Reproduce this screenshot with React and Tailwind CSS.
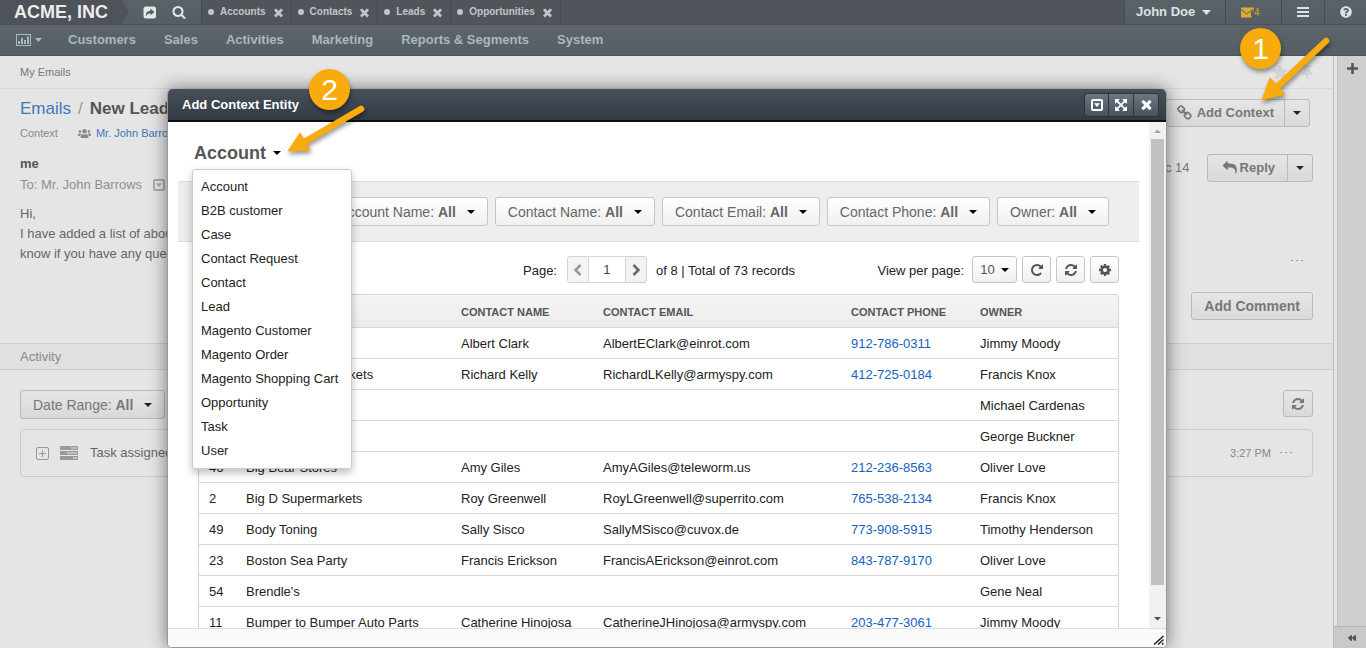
import React from "react";
import { FaUsers, FaQuestionCircle, FaBackward, FaStar, FaThumbtack } from "react-icons/fa";

const PATHS = {
  times:
    "M1490 1322q0 40-28 68l-136 136q-28 28-68 28t-68-28l-294-294-294 294q-28 28-68 28t-68-28l-136-136q-28-28-28-68t28-68l294-294-294-294q-28-28-28-68t28-68l136-136q28-28 68-28t68 28l294 294 294-294q28-28 68-28t68 28l136 136q28 28 28 68t-28 68l-294 294 294 294q28 28 28 68z",
  refresh:
    "M1639 1056q0 5-1 7-64 268-268 434.5t-478 166.5q-146 0-282.5-55t-243.5-157l-129 129q-19 19-45 19t-45-19-19-45v-448q0-26 19-45t45-19h448q26 0 45 19t19 45-19 45l-137 137q71 66 161 102t187 36q134 0 250-65t186-179q11-17 53-117 8-23 30-23h192q13 0 22.5 9.5t9.5 22.5zm25-800v448q0 26-19 45t-45 19h-448q-26 0-45-19t-19-45 19-45l138-138q-148-137-349-137-134 0-250 65t-186 179q-11 17-53 117-8 23-30 23h-199q-13 0-22.5-9.5t-9.5-22.5v-7q65-268 270-434.5t480-166.5q146 0 284 55.5t245 156.5l130-129q19-19 45-19t45 19 19 45z",
  cog:
    "M1152 896q0-106-75-181t-181-75-181 75-75 181 75 181 181 75 181-75 75-181zm512-109v222q0 12-8 23t-20 13l-185 28q-19 54-39 91 35 50 107 138 10 12 10 25t-9 23q-27 37-99 108t-94 71q-12 0-26-9l-138-108q-44 23-91 38-16 136-29 186-7 28-36 28h-222q-14 0-24.5-8.500t-11.500-21.500l-28-184q-49-16-90-37l-141 107q-10 9-25 9-14 0-25-11-126-114-165-168-7-10-7-23 0-12 8-23 15-21 51-66.500t54-70.500q-27-50-41-99l-183-27q-13-2-21-12.500t-8-23.500v-222q0-12 8-23t19-13l186-28q14-46 39-92-40-57-107-138-10-12-10-24 0-10 9-23 26-36 98.500-107.500t94.500-71.500q13 0 26 10l138 107q44-23 91-38 16-136 29-186 7-28 36-28h222q14 0 24.500 8.500t11.500 21.500l28 184q49 16 90 37l142-107q9-9 24-9 13 0 25 10 129 119 165 170 7 8 7 22 0 12-8 23-15 21-51 66.500t-54 70.500q26 50 41 98l183 28q13 2 21 12.500t8 23.500z",
  repeat:
    "M1664 256v448q0 26-19 45t-45 19h-448q-42 0-59-40-17-39 14-69l138-138q-148-137-349-137-104 0-198.5 40.5t-163.5 109.5-109.5 163.5-40.5 198.5 40.5 198.5 109.5 163.5 163.5 109.5 198.5 40.5q119 0 225-52t179-147q7-10 23-12 15 0 25 9l137 138q9 8 9.5 20.5t-7.5 22.5q-109 132-264 204.5t-327 72.5q-156 0-298-61t-245-164-164-245-61-298 61-298 164-245 245-164 298-61q147 0 284.5 55.5t244.5 156.5l130-129q29-31 70-14 39 17 39 59z",
  search:
    "M1216 832q0-185-131.5-316.5t-316.5-131.5-316.5 131.5-131.5 316.5 131.5 316.5 316.5 131.5 316.5-131.5 131.5-316.5zm512 832q0 52-38 90t-90 38q-54 0-90-38l-343-342q-179 124-399 124-143 0-273.5-55.5t-225-150-150-225-55.5-273.5 55.5-273.5 150-225 225-150 273.5-55.5 273.5 55.5 225 150 150 225 55.5 273.5q0 220-124 399l343 343q37 37 37 90z",
  reply:
    "M1792 1120q0 166-127 451-3 7-10.5 24t-13.5 30-13 22q-12 17-28 17-15 0-23.5-10t-8.5-25q0-9 2.5-26.5t2.5-23.5q5-68 5-123 0-112-19.5-200.5t-54-153.5-89-112-113-77.5-139.5-47.5-155.5-25-174.5-7.5h-224v256q0 26-19 45t-45 19-45-19l-512-512q-19-19-19-45t19-45l512-512q19-19 45-19t45 19 19 45v256h224q713 0 875 403 53 134 53 333z",
  expand:
    "M1411 541l-355 355 355 355 144-144q29-31 70-14 39 17 39 59v448q0 26-19 45t-45 19h-448q-42 0-59-40-17-39 14-69l144-144-355-355-355 355 144 144q31 30 14 69-17 40-59 40h-448q-26 0-45-19t-19-45v-448q0-42 40-59 39-17 69 14l144 144 355-355-355-355-144 144q-19 19-45 19-12 0-24-5-40-17-40-59v-448q0-26 19-45t45-19h448q42 0 59 40 17 39-14 69l-144 144 355 355 355-355-144-144q-31-30-14-69 17-40 59-40h448q26 0 45 19t19 45v448q0 42-39 59-13 5-25 5-26 0-45-19z",
  link:
    "M1456 1216q0-40-28-68l-208-208q-28-28-68-28-42 0-72 32 3 3 19 18.5t21.5 21.5 15 19 13 25.5 3.5 27.5q0 40-28 68t-68 28q-15 0-27.5-3.5t-25.5-13-19-15-21.5-21.5-18.5-19q-33 31-33 73 0 40 28 68l206 207q27 27 68 27 40 0 68-26l147-146q28-28 28-67zm-703-705q0-40-28-68l-206-207q-28-28-68-28-39 0-68 27l-147 146q-28 28-28 67 0 40 28 68l208 208q27 27 68 27 42 0 72-31-3-3-19-18.5t-21.5-21.5-15-19-13-25.5-3.5-27.5q0-40 28-68t68-28q15 0 27.5 3.5t25.5 13 19 15 21.5 21.5 18.5 19q33-31 33-73zm895 705q0 120-85 203l-147 146q-83 83-203 83-121 0-204-85l-206-207q-83-83-83-203 0-123 88-209l-88-88q-86 88-208 88-120 0-204-84l-208-208q-84-84-84-204t85-203l147-146q83-83 203-83 121 0 204 85l206 207q83 83 83 203 0 123-88 209l88 88q86-88 208-88 120 0 204 84l208 208q84 84 84 204z",
};

function Icon({ name, className }) {
  return (
    <svg viewBox="0 0 1792 1792" fill="currentColor" aria-hidden="true" className={className}>
      <path d={PATHS[name]} />
    </svg>
  );
}

function Caret({ className = "text-black" }) {
  return (
    <svg viewBox="0 0 8 4" aria-hidden="true" className={`h-1 w-2 shrink-0 ${className}`}>
      <path d="M0 0h8L4 4z" fill="currentColor" />
    </svg>
  );
}

function Chevron({ d }) {
  return (
    <svg viewBox="0 0 10 12" aria-hidden="true" className="h-3 w-[10px]">
      <path d={d} fill="none" stroke="currentColor" strokeWidth="2.500" />
    </svg>
  );
}

function CaretBox({ className }) {
  return (
    <svg viewBox="0 0 12 12" aria-hidden="true" className={className}>
      <rect x="1" y="1" width="10" height="10" rx="1" fill="none" stroke="currentColor" strokeWidth="2" />
      <path d="M3 4.2h6L6 8z" fill="currentColor" />
    </svg>
  );
}

function Dots() {
  return (
    <svg viewBox="0 0 12 2" aria-hidden="true" className="h-0.5 w-3 text-[#999]">
      <path d="M0 0h2v1H0zM5 0h2v1H5zM10 0h2v1h-2z" fill="currentColor" />
    </svg>
  );
}

function NavBar() {
  const tabs = ["Accounts", "Contacts", "Leads", "Opportunities"];
  const menu = ["Customers", "Sales", "Activities", "Marketing", "Reports & Segments", "System"];
  return (
    <header className="shrink-0">
      <div className="flex h-6 items-stretch bg-[#50545b]">
        <a href="#home" className="flex w-[118px] items-center bg-[#4e5259] pl-[14px] text-lg leading-6 font-bold text-[#ededed]">
          ACME, INC
        </a>
        <div className="flex w-[84px] items-center border-r border-[#474b51] bg-gradient-to-b from-[#596267] to-[#555e64]">
          <svg viewBox="0 0 11 24" aria-hidden="true" className="h-6 w-[11px] text-[#4e5259]">
            <path d="M0 0h4l7 12-7 12H0z" fill="currentColor" />
          </svg>
          <button aria-label="Share" className="ml-[14px] text-[#e4e6e7]">
            <svg viewBox="0 0 14 13" className="h-[13px] w-[14px]">
              <rect x="0.5" y="0.5" width="12.5" height="12" rx="2.5" fill="currentColor" />
              <path d="M3.4 10.4C2.400 6.800 4.200 4.800 7.400 4.700V2.600L11.400 6l-4 3.300V7.200C5.200 7.200 4 8 3.400 10.400z" fill="#50585e" />
            </svg>
          </button>
          <button aria-label="Search" className="ml-[15px] text-[#e4e6e7]">
            <Icon name="search" className="h-[14px] w-[14px]" />
          </button>
        </div>
        <nav aria-label="Open pages" className="flex">
          {tabs.map((t) => (
            <div key={t} className="flex items-center border-r border-[#474b51] px-[6px]">
              <span className="size-[6px] rounded-full bg-[#c2c4c7]" />
              <a href={"#" + t} className="ml-[6px] text-[10px] leading-6 font-bold text-[#c3c6ca]">
                {t}
              </a>
              <button aria-label={"Close " + t} className="ml-[6px] text-[#c2c4c7]">
                <Icon name="times" className="size-[13px]" />
              </button>
            </div>
          ))}
        </nav>
        <div className="ml-auto flex items-stretch bg-gradient-to-b from-[#596267] to-[#555e64]">
          <button className="flex w-[102px] items-center gap-[7px] border-r border-l border-[#474b51] pl-[11px] text-[13px] font-bold whitespace-nowrap text-[#dfe1e2]">
            John Doe
            <svg viewBox="0 0 9 5" aria-hidden="true" className="h-[5px] w-[9px]">
              <path d="M0 0h9L4.500 5z" fill="currentColor" />
            </svg>
          </button>
          <button aria-label="4 unread emails" className="flex w-14 items-center border-r border-[#474b51] pl-[15px] text-[10px] text-[#cf9f31]">
            <svg viewBox="0 0 14 11" className="h-[11px] w-[13px] shrink-0">
              <path d="M0 0h14v2.500A5 5 0 0 0 12 11H0z" fill="#dcaa38" />
              <path d="M0 2l6 5 7-5" fill="none" stroke="#5d5640" strokeWidth="1" />
            </svg>
            4
          </button>
          <button aria-label="Menu" className="flex w-[43px] items-center justify-center border-r border-[#474b51]">
            <svg viewBox="0 0 12 10" className="h-[10px] w-3 text-[#dfe1e2]">
              <path d="M0 0h12v2H0zM0 4h12v2H0zM0 8h12v2H0z" fill="currentColor" />
            </svg>
          </button>
          <button aria-label="Help" className="flex w-[41px] items-center justify-center text-[#dfe1e2]">
            <FaQuestionCircle className="size-3" />
          </button>
        </div>
      </div>
      <nav aria-label="Main" className="flex h-8 items-center gap-7 border-t border-b border-t-[#4b5157] border-b-[#4d5559] bg-gradient-to-b from-[#5b6469] to-[#565f65] pl-4 text-[13px] font-bold text-[#a9b7bf]">
        <button aria-label="Dashboards" className="flex w-6 items-center gap-1">
          <svg viewBox="0 0 15 12" className="h-3 w-[15px] shrink-0">
            <rect x="0.5" y="0.5" width="14" height="11" fill="none" stroke="currentColor" />
            <path d="M2 7h2v3H2zM5 4h2v6H5zM8 6h2v4H8zM11 2.5h2V10h-2z" fill="currentColor" />
          </svg>
          <svg viewBox="0 0 7 4" className="h-1 w-[7px] shrink-0">
            <path d="M0 0h7L3.500 4z" fill="currentColor" />
          </svg>
        </button>
        {menu.map((m) => (
          <a key={m} href={"#" + m} className="leading-6">
            {m}
          </a>
        ))}
      </nav>
    </header>
  );
}

const dimButton = "flex items-center rounded-[3px] border border-[#b9b9b9] bg-gradient-to-b from-[#e6e6e6] to-[#d9d9d9]";

function EmailPage() {
  return (
    <div className="flex min-h-0 flex-1 bg-[#e5e5e5]">
      <main className="flex min-w-0 flex-1 flex-col text-[13px] text-[#666]">
        <div className="flex h-[33px] shrink-0 items-center justify-between border-b border-[#d8d8d8] pr-[19px] pl-5 text-[11px] text-[#777]">
          My Emails
          <div className="flex items-center gap-3 text-[#d3d3d3]">
            <FaStar className="size-4" />
            <FaThumbtack className="size-[14px]" />
          </div>
        </div>
        <div className="flex shrink-0 justify-between pt-[9px] pr-5 pl-5">
          <div>
            <h1 className="flex gap-[7px] text-[17px] leading-[21px] text-[#999]">
              <a href="#emails" className="text-[#3d78bb]">Emails</a>
              <span>/</span>
              <span className="font-bold text-[#555]">New Leads</span>
            </h1>
            <div className="mt-1 flex items-center text-[11px] leading-5 text-[#888]">
              Context
              <FaUsers className="ml-5 size-[13px]" />
              <a href="#barrows" className="ml-[5px] text-[#3d78bb]">Mr. John Barrows</a>
            </div>
            <div className="mt-[11px] text-[13px] leading-5 font-bold text-[#555]">me</div>
            <div className="mt-px flex items-center gap-[11px] leading-5 text-[#8f8f8f]">
              To: Mr. John Barrows
              <CaretBox className="size-3 text-[#aaa]" />
            </div>
            <p className="mt-[9px] leading-5">
              Hi,
              <br />
              I have added a list of about
              <br />
              know if you have any questions
            </p>
          </div>
          <div className="flex flex-col items-end">
            <div className={`${dimButton} mt-px mr-[3px] h-[28px]`}>
              <button className="flex h-full items-center gap-1 pr-[10px] pl-[10px] text-[13px] font-bold text-[#777]">
                <Icon name="link" className="size-4" />
                Add Context
              </button>
              <button aria-label="More context actions" className="flex h-full w-[25px] items-center justify-center border-l border-[#b9b9b9]">
                <Caret className="text-[#222]" />
              </button>
            </div>
            <div className="mt-[27px] flex items-center gap-[17px]">
              <span className="text-[13px] text-[#777]">Dec 14</span>
              <div className={`${dimButton} h-[28px]`}>
                <button className="flex h-full items-center gap-[3px] pr-3 pl-[15px] text-[13px] font-bold text-[#777]">
                  <Icon name="reply" className="size-[14px]" />
                  Reply
                </button>
                <button aria-label="More reply actions" className="flex h-full w-[25px] items-center justify-center border-l border-[#b9b9b9]">
                  <Caret className="text-[#222]" />
                </button>
              </div>
            </div>
            <button aria-label="More" className="mt-[73px] mr-[10px] flex h-3 items-center">
              <Dots />
            </button>
          </div>
        </div>
        <div className="flex shrink-0 justify-end pt-[25px] pr-5">
          <button className={`${dimButton} h-7 px-3 text-sm font-bold text-[#777]`}>Add Comment</button>
        </div>
        <h2 className="mt-[23px] flex h-[27px] shrink-0 items-center border-t border-b border-[#cdcdcd] bg-[#e0e0e0] pl-5 text-[13px] text-[#888]">
          Activity
        </h2>
        <div className="pt-5 pr-5 pl-5">
          <div className="flex items-start justify-between">
            <button className={`${dimButton} h-[29px] px-3 text-sm text-[#777]`}>
              Date Range:&nbsp;<b>All</b>
              <span className="ml-[11px]">
                <Caret className="text-[#222]" />
              </span>
            </button>
            <button aria-label="Refresh" className={`${dimButton} h-[27px] w-[30px] justify-center text-[#777]`}>
              <Icon name="refresh" className="size-[14px]" />
            </button>
          </div>
          <div className="mt-[10px] flex h-12 items-center rounded-[4px] border border-[#cbcbcb] px-[15px]">
            <svg viewBox="0 0 13 13" aria-hidden="true" className="size-[13px] text-[#999]">
              <rect x="0.500" y="0.500" width="12" height="12" rx="1.500" fill="none" stroke="currentColor" />
              <path d="M6 3h1v3h3v1H7v3H6V7H3V6h3z" fill="currentColor" />
            </svg>
            <svg viewBox="0 0 18 14" aria-hidden="true" className="ml-[11px] h-[14px] w-[18px] text-[#999]">
              <path d="M0 0h18v4H0zM0 5h18v4H0zM0 10h18v4H0z" fill="currentColor" />
              <path d="M11 1.500h6v1h-6zM7 6.500h10v1H7zM13 11.500h4v1h-4z" fill="#e5e5e5" />
            </svg>
            <span className="ml-3">Task assigned</span>
            <span className="ml-auto text-[11px] text-[#888]">3:27 PM</span>
            <button aria-label="More" className="mr-[5px] ml-[9px]">
              <Dots />
            </button>
          </div>
        </div>
      </main>
      <aside className="flex w-[33px] flex-col border-l border-[#bcbcbc]">
        <div className="ml-[3px] flex flex-1 flex-col items-center border-l border-[#c4c4c4] bg-[#cfcfcf] pt-[7px]">
          <button aria-label="Add widget">
            <svg viewBox="0 0 11 11" className="size-[11px] text-[#555]">
              <path d="M4.200 0h2.600v4.200H11v2.600H6.800V11H4.200V6.800H0V4.200h4.200z" fill="currentColor" />
            </svg>
          </button>
        </div>
        <button aria-label="Expand sidebar" className="flex h-[22px] items-center justify-center border-t border-[#b5b5b5] bg-[#c9c9c9] pl-1 text-[#555]">
          <FaBackward className="size-2" />
        </button>
      </aside>
    </div>
  );
}

const entities = [
  "Account", "B2B customer", "Case", "Contact Request", "Contact", "Lead",
  "Magento Customer", "Magento Order", "Magento Shopping Cart", "Opportunity", "Task", "User",
];

const filters = ["Account Name", "Contact Name", "Contact Email", "Contact Phone", "Owner"];

const rows = [
  ["", "", "Albert Clark", "AlbertEClark@einrot.com", "912-786-0311", "Jimmy Moody"],
  ["", "Atlantic Supermarkets", "Richard Kelly", "RichardLKelly@armyspy.com", "412-725-0184", "Francis Knox"],
  ["", "", "", "", "", "Michael Cardenas"],
  ["", "", "", "", "", "George Buckner"],
  ["46", "Big Bear Stores", "Amy Giles", "AmyAGiles@teleworm.us", "212-236-8563", "Oliver Love"],
  ["2", "Big D Supermarkets", "Roy Greenwell", "RoyLGreenwell@superrito.com", "765-538-2134", "Francis Knox"],
  ["49", "Body Toning", "Sally Sisco", "SallyMSisco@cuvox.de", "773-908-5915", "Timothy Henderson"],
  ["23", "Boston Sea Party", "Francis Erickson", "FrancisAErickson@einrot.com", "843-787-9170", "Oliver Love"],
  ["54", "Brendle's", "", "", "", "Gene Neal"],
  ["11", "Bumper to Bumper Auto Parts", "Catherine Hinojosa", "CatherineJHinojosa@armyspy.com", "203-477-3061", "Jimmy Moody"],
];

const lightButton = "flex items-center justify-center rounded-[3px] border border-[#c6c6c6] bg-gradient-to-b from-white to-[#f0f0f0] text-[#555]";

function EntityGrid() {
  return (
    <table className="w-full table-fixed border-separate border-spacing-0 rounded-t-[3px] border border-b-0 border-[#d4d4d4] text-left text-[13px] text-[#222]">
      <colgroup>
        <col className="w-[37px]" />
        <col className="w-[215px]" />
        <col className="w-[142px]" />
        <col className="w-[248px]" />
        <col className="w-[129px]" />
        <col />
      </colgroup>
      <thead>
        <tr className="h-8 bg-gradient-to-b from-[#f5f5f5] to-[#ececec] text-[11px] text-[#555]">
          {["", "", "CONTACT NAME", "CONTACT EMAIL", "CONTACT PHONE", "OWNER"].map((h, i) => (
            <th key={i} scope="col" className="px-[10px] pt-[2px] font-bold">
              {h}
            </th>
          ))}
        </tr>
      </thead>
      <tbody>
        {rows.map((r, i) => (
          <tr key={i} className="h-[31px]">
            {r.map((c, j) => (
              <td key={j} className="border-t border-[#d9d9d9] px-[10px] pt-[2px] whitespace-nowrap">
                {j === 4 && c ? <a href={"tel:" + c} className="text-[#1562c0]">{c}</a> : c}
              </td>
            ))}
          </tr>
        ))}
      </tbody>
    </table>
  );
}

function ContextDialog() {
  return (
    <div className="absolute inset-0 flex pt-[89px] pr-[199px] pl-[167px]">
      <section role="dialog" aria-label="Add Context Entity" className="flex min-w-0 flex-1 flex-col overflow-hidden rounded-[5px] border border-t-0 border-[#999] bg-white shadow-[0_0_18px_rgba(0,0,0,0.5)]">
        <div className="flex h-[33px] shrink-0 items-center justify-between border-b-2 border-[#0c0e10] bg-gradient-to-b from-[#47505b] to-[#333b44] pr-[7px] pl-[14px]">
          <h2 className="text-[13px] font-bold text-white">Add Context Entity</h2>
          <div className="flex h-6 divide-x divide-[#2d343c] rounded-[3px] border border-[#2d343c] bg-gradient-to-b from-[#6d7782] to-[#49525c] text-white">
            <button aria-label="Minimize" className="flex w-6 items-center justify-center">
              <CaretBox className="size-3" />
            </button>
            <button aria-label="Maximize" className="flex w-[25px] items-center justify-center">
              <Icon name="expand" className="size-[14px]" />
            </button>
            <button aria-label="Close" className="flex w-6 items-center justify-center">
              <Icon name="times" className="size-[15px]" />
            </button>
          </div>
        </div>
        <div className="flex min-h-0 flex-1">
          <div className="min-w-0 flex-1 overflow-hidden pt-5 pr-[10px] pl-[10px]">
            <div className="relative h-[39px] pl-4">
              <button aria-haspopup="menu" aria-expanded="true" className="flex items-center gap-[7px] text-lg leading-[22px] font-bold text-[#555]">
                Account
                <Caret />
              </button>
              <ul role="menu" className="absolute top-[27px] left-[14px] z-10 w-[160px] rounded-[3px] border border-[#ccc] bg-white py-[5px] text-[13px] leading-6 text-[#222] shadow-[0_4px_8px_rgba(0,0,0,0.25)]">
                {entities.map((e) => (
                  <li key={e} role="menuitem" className="pl-2">
                    {e}
                  </li>
                ))}
              </ul>
            </div>
            <div className="flex h-[61px] items-center justify-end gap-[7px] border-t border-b border-[#dcdcdc] bg-[#eee] pr-[30px]">
              {filters.map((f) => (
                <button key={f} className={`${lightButton} h-[29px] shrink-0 px-3 text-sm whitespace-nowrap text-[#666]`}>
                  {f}:&nbsp;<b>All</b>
                  <span className="ml-[11px]">
                    <Caret />
                  </span>
                </button>
              ))}
            </div>
            <div className="px-5">
              <div className="flex items-center justify-between pt-[14px] pb-[11px] text-[13px] text-[#222]">
                <div className="flex items-center pl-[325px]">
                  <label htmlFor="page" className="pt-[2px]">Page:</label>
                  <div className="ml-[10px] flex h-[27px] text-[#666]">
                    <button aria-label="Previous page" className="flex w-[22px] items-center justify-center rounded-l-[3px] border border-[#d4d4d4] bg-[#f4f4f4] text-[#999]">
                      <Chevron d="M7.500 1L2.500 6l5 5" />
                    </button>
                    <input id="page" defaultValue="1" className="w-9 border-t border-b border-[#d4d4d4] bg-white text-center text-[13px] text-[#444]" />
                    <button aria-label="Next page" className="flex w-[22px] items-center justify-center rounded-r-[3px] border border-[#cfcfcf] bg-[#f2f2f2]">
                      <Chevron d="M2.500 1l5 5-5 5" />
                    </button>
                  </div>
                  <span className="ml-[9px] pt-[2px]">of 8 | Total of 73 records</span>
                </div>
                <div className="flex items-center gap-[5px]">
                  <span className="mr-[3px] pt-[2px]">View per page:</span>
                  <button className={`${lightButton} h-[27px] w-[45px] gap-[6px] text-[13px]`}>
                    10
                    <Caret />
                  </button>
                  <button aria-label="Refresh" className={`${lightButton} h-[27px] w-[29px]`}>
                    <Icon name="repeat" className="size-[14px]" />
                  </button>
                  <button aria-label="Reset" className={`${lightButton} h-[27px] w-[29px]`}>
                    <Icon name="refresh" className="size-[14px]" />
                  </button>
                  <button aria-label="Grid settings" className={`${lightButton} h-[27px] w-[29px]`}>
                    <Icon name="cog" className="size-[14px]" />
                  </button>
                </div>
              </div>
              <EntityGrid />
            </div>
          </div>
          <div aria-hidden="true" className="flex w-[17px] shrink-0 flex-col items-center bg-[#f1f1f1]">
            <svg viewBox="0 0 17 17" className="size-[17px] shrink-0 text-[#a3a3a3]">
              <path d="M5 11h7L8.500 7.500z" fill="currentColor" />
            </svg>
            <div className="w-[13px] flex-[446] bg-[#c1c1c1]" />
            <div className="flex-[26]" />
            <svg viewBox="0 0 17 17" className="size-[17px] shrink-0 text-[#505050]">
              <path d="M5 6h7L8.500 9.500z" fill="currentColor" />
            </svg>
          </div>
        </div>
        <div className="flex h-[19px] shrink-0 items-end justify-end border-t border-[#ddd] bg-[#fafafa] pr-[2px] pb-[2px]">
          <svg viewBox="0 0 10 10" aria-hidden="true" className="size-[10px]">
            <path d="M0 9.500L9.500 1M4 9.500L9.500 4.500M8 9.500L9.500 8" stroke="#222" strokeWidth="1.500" fill="none" />
          </svg>
        </div>
      </section>
    </div>
  );
}

function Marker({ label, className }) {
  return (
    <div className={`absolute flex size-[41px] items-center justify-center rounded-full bg-[#f8ab0c] text-[30px] leading-none text-white shadow-[1px_3px_4px_rgba(0,0,0,0.4)] ${className}`}>
      {label}
    </div>
  );
}

function Annotations() {
  return (
    <>
      <Marker label="1" className="top-[28px] right-[85px]" />
      <svg viewBox="0 0 80 76" aria-hidden="true" className="absolute top-[32px] right-[30px] h-[76px] w-[80px] drop-shadow-[1px_3px_2px_rgba(0,0,0,0.4)]">
        <path d="M70 9L22 54" stroke="#f8ab0c" strokeWidth="6.500" strokeLinecap="round" />
        <path d="M6 68L14 46L29 62Z" fill="#f8ab0c" stroke="#f8ab0c" strokeLinejoin="round" />
      </svg>
      <Marker label="2" className="top-[69px] left-[309px]" />
      <svg viewBox="0 0 84 56" aria-hidden="true" className="absolute top-[104px] left-[282px] h-[56px] w-[84px] drop-shadow-[1px_3px_2px_rgba(0,0,0,0.4)]">
        <path d="M79 5L24 37" stroke="#f8ab0c" strokeWidth="6.500" strokeLinecap="round" />
        <path d="M6 47L18 29L28 46Z" fill="#f8ab0c" stroke="#f8ab0c" strokeLinejoin="round" />
      </svg>
    </>
  );
}

export default function App() {
  return (
    <div className="relative flex h-screen flex-col overflow-hidden font-['Liberation_Sans',Arial,sans-serif]">
      <NavBar />
      <EmailPage />
      <ContextDialog />
      <Annotations />
    </div>
  );
}
